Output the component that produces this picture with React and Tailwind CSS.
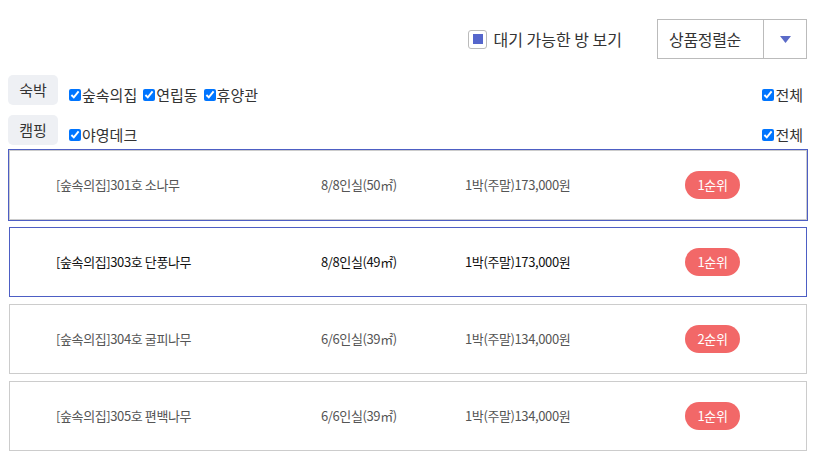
import { useState } from 'react'

const FONT = { fontFamily: '"Noto Sans CJK KR", "Noto Sans", sans-serif' }

const ROOMS = [
  { name: '[숲속의집]301호 소나무', cap: '8/8인실(50㎡)', price: '1박(주말)173,000원', rank: '1순위', state: 'hover' },
  { name: '[숲속의집]303호 단풍나무', cap: '8/8인실(49㎡)', price: '1박(주말)173,000원', rank: '1순위', state: 'active' },
  { name: '[숲속의집]304호 굴피나무', cap: '6/6인실(39㎡)', price: '1박(주말)134,000원', rank: '2순위' },
  { name: '[숲속의집]305호 편백나무', cap: '6/6인실(39㎡)', price: '1박(주말)134,000원', rank: '1순위' },
]

function Check({ label }) {
  return (
    <label className="flex items-center text-[15px] text-[#333] leading-none">
      <input type="checkbox" defaultChecked className="w-[12px] h-[12px] m-0 mr-[1px]" />
      <span>{label}</span>
    </label>
  )
}

function Category({ title, items, className = '' }) {
  return (
    <div className={`flex items-center h-[30px] ${className}`}>
      <span className="w-[50px] h-[30px] flex items-center justify-center rounded-[5px] bg-[#eef0f4] text-[15px] text-[#333]">
        {title}
      </span>
      <div className="flex items-center gap-[6px] ml-[11px] mt-[9px]">
        {items.map(i => <Check key={i} label={i} />)}
      </div>
      <div className="ml-auto mr-[4px] mt-[9px]">
        <Check label="전체" />
      </div>
    </div>
  )
}

function RoomRow({ room }) {
  const border =
    room.state === 'active'
      ? 'border-[#4d5ec4]'
      : 'border-[#cccccc]'
  const ring = room.state === 'hover' ? 'outline outline-1 outline-[#4d5ec4]' : ''
  const text = room.state === 'active' ? 'text-[#111]' : 'text-[#555]'
  return (
    <div className={`h-[70px] ml-[1px] border ${border} ${ring} bg-white flex items-center pl-[46px] text-[13px] tracking-[-0.03em] ${text}`}>
      <span className="w-[265px]">{room.name}</span>
      <span className="w-[144px]">{room.cap}</span>
      <span className="w-[220px]">{room.price}</span>
      <span className="w-[55px] h-[28px] rounded-full bg-[#f26868] text-white flex items-center justify-center">
        {room.rank}
      </span>
    </div>
  )
}

export default function App() {
  const [avail, setAvail] = useState(false)
  return (
    <div className="w-[815px] h-[453px] bg-white px-[8px] overflow-hidden" style={FONT}>
      <div className="flex justify-end items-center pt-[19px]">
        <button onClick={() => setAvail(!avail)} className="flex items-center gap-[6px] text-[16px] text-[#333]">
          <span className="w-[19px] h-[19px] rounded-[3px] border border-[#bbbbbb] flex items-center justify-center bg-white">
            <span className="w-[10px] h-[10px] bg-[#5566cc]" />
          </span>
          대기 가능한 방 보기
        </button>
        <div className="ml-[35px] w-[150px] h-[40px] border border-[#bbbbbb] flex">
          <span className="flex-1 flex items-center pl-[11px] text-[16px] text-[#333] tracking-[-0.02em]">상품정렬순</span>
          <span className="w-[43px] border-l border-[#bbbbbb] flex items-center justify-center">
            <svg width="11" height="7" viewBox="0 0 11 7"><path d="M0 0h11L5.5 7z" fill="#5b6bc8" /></svg>
          </span>
        </div>
      </div>

      <Category title="숙박" items={['숲속의집', '연립동', '휴양관']} className="mt-[16px]" />
      <Category title="캠핑" items={['야영데크']} className="mt-[10px]" />

      <div className="flex flex-col gap-[7px] mt-[5px]">
        {ROOMS.map(r => <RoomRow key={r.name} room={r} />)}
      </div>
    </div>
  )
}
